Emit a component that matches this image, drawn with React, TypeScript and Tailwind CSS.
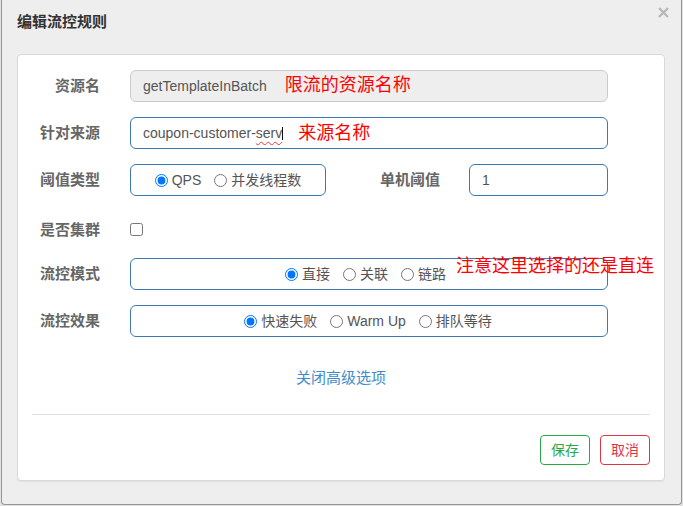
import React from "react";

function Radio({ name, label, checked }: { name: string; label: string; checked?: boolean }) {
  return (
    <label className="flex items-center gap-[4px] text-[14px] text-[#555]">
      <input type="radio" name={name} defaultChecked={checked} className="m-0 w-[13px] h-[13px]" />
      <span>{label}</span>
    </label>
  );
}

function Label({ children }: { children: React.ReactNode }) {
  return (
    <div className="w-[82px] shrink-0 text-right text-[15px] font-bold text-[#666] leading-[20px]">{children}</div>
  );
}

export default function App() {
  return (
    <div className="w-[683px] h-[506px] bg-[#e2e2e2] overflow-hidden font-['Liberation_Sans','Noto_Sans_CJK_SC',sans-serif]">
      <div className="relative ml-[1px] w-[681px] h-[505px] bg-[#eeeeee] border-l border-r border-b border-[#959595] rounded-b-[4px] pl-[15px] pr-[16px]">
        <div className="h-[54px] pt-[12px]">
          <div className="text-[15px] font-bold text-[#333] leading-[20px]">编辑流控规则</div>
        </div>
        <div className="absolute top-[7px] right-[12px] w-[11px] h-[11px]">
          <svg width="11" height="11" viewBox="0 0 11 11">
            <path d="M1 1 L10 10 M10 1 L1 10" stroke="#b8b8b8" strokeWidth="2.4" strokeLinecap="butt" />
          </svg>
        </div>

        <div className="h-[427px] bg-white border border-[#d9d9d9] rounded-[4px] shadow-[0_1px_1px_rgba(0,0,0,0.06)] pt-[15px] flex flex-col">
          <div className="flex flex-col gap-[15px]">
            <div className="flex items-center h-[32px]">
              <Label>资源名</Label>
              <div className="ml-[30px] w-[478px] h-[32px] bg-[#eeeeee] border border-[#cccccc] rounded-[6px] flex items-center pl-[12px]">
                <span className="text-[14px] text-[#555]">getTemplateInBatch</span>
                <span className="ml-[18px] text-[18px] text-[#ff0000] leading-[24px] -mt-[3px]">限流的资源名称</span>
              </div>
            </div>

            <div className="flex items-center h-[32px]">
              <Label>针对来源</Label>
              <div className="ml-[30px] w-[478px] h-[32px] border border-[#3c78b4] rounded-[6px] flex items-center pl-[12px]">
                <span className="text-[14px] text-[#555]">
                  coupon-customer-
                  <span className="underline decoration-wavy decoration-[#e33] decoration-1 underline-offset-[3px]">serv</span>
                </span>
                <span className="w-[1px] h-[13px] bg-[#111]"></span>
                <span className="ml-[15px] text-[18px] text-[#ff0000] leading-[24px]">来源名称</span>
              </div>
            </div>

            <div className="flex items-center h-[32px]">
              <Label>阈值类型</Label>
              <div className="ml-[30px] w-[196px] h-[32px] border border-[#3c78b4] rounded-[6px] flex items-center justify-center gap-[13px]">
                <Radio name="grade" label="QPS" checked />
                <Radio name="grade" label="并发线程数" />
              </div>
              <div className="w-[114px] text-right text-[15px] font-bold text-[#666] leading-[20px]">单机阈值</div>
              <div className="ml-[29px] w-[139px] h-[32px] border border-[#3c78b4] rounded-[6px] flex items-center pl-[12px] text-[14px] text-[#555]">
                1
              </div>
            </div>

            <div className="flex items-center h-[32px] pt-[5px]">
              <Label>是否集群</Label>
              <input type="checkbox" className="ml-[30px] m-0 w-[13px] h-[13px]" />
            </div>

            <div className="relative flex items-center h-[32px]">
              <Label>流控模式</Label>
              <div className="ml-[30px] w-[478px] h-[32px] border border-[#3c78b4] rounded-[6px] flex items-center justify-center gap-[13px] pr-[7px]">
                <Radio name="strategy" label="直接" checked />
                <Radio name="strategy" label="关联" />
                <Radio name="strategy" label="链路" />
              </div>
              <span className="absolute left-[438px] top-[-4px] text-[18px] text-[#ff0000] leading-[24px] whitespace-nowrap">
                注意这里选择的还是直连
              </span>
            </div>

            <div className="flex items-center h-[32px]">
              <Label>流控效果</Label>
              <div className="ml-[30px] w-[478px] h-[32px] border border-[#3c78b4] rounded-[6px] flex items-center justify-center gap-[13px] pr-[2px]">
                <Radio name="behavior" label="快速失败" checked />
                <Radio name="behavior" label="Warm Up" />
                <Radio name="behavior" label="排队等待" />
              </div>
            </div>
          </div>

          <div className="mt-[31px] text-center text-[15px] text-[#428bca] leading-[20px]">关闭高级选项</div>

          <div className="mt-[26px] mx-[14px] h-[1px] bg-[#e0e0e0]"></div>

          <div className="mt-[20px] flex justify-end gap-[10px] pr-[14px]">
            <button className="w-[50px] h-[30px] bg-white border border-[#28a745] rounded-[4px] text-[14px] text-[#28a745]">保存</button>
            <button className="w-[50px] h-[30px] bg-white border border-[#dc3545] rounded-[4px] text-[14px] text-[#dc3545]">取消</button>
          </div>
        </div>
      </div>
    </div>
  );
}
